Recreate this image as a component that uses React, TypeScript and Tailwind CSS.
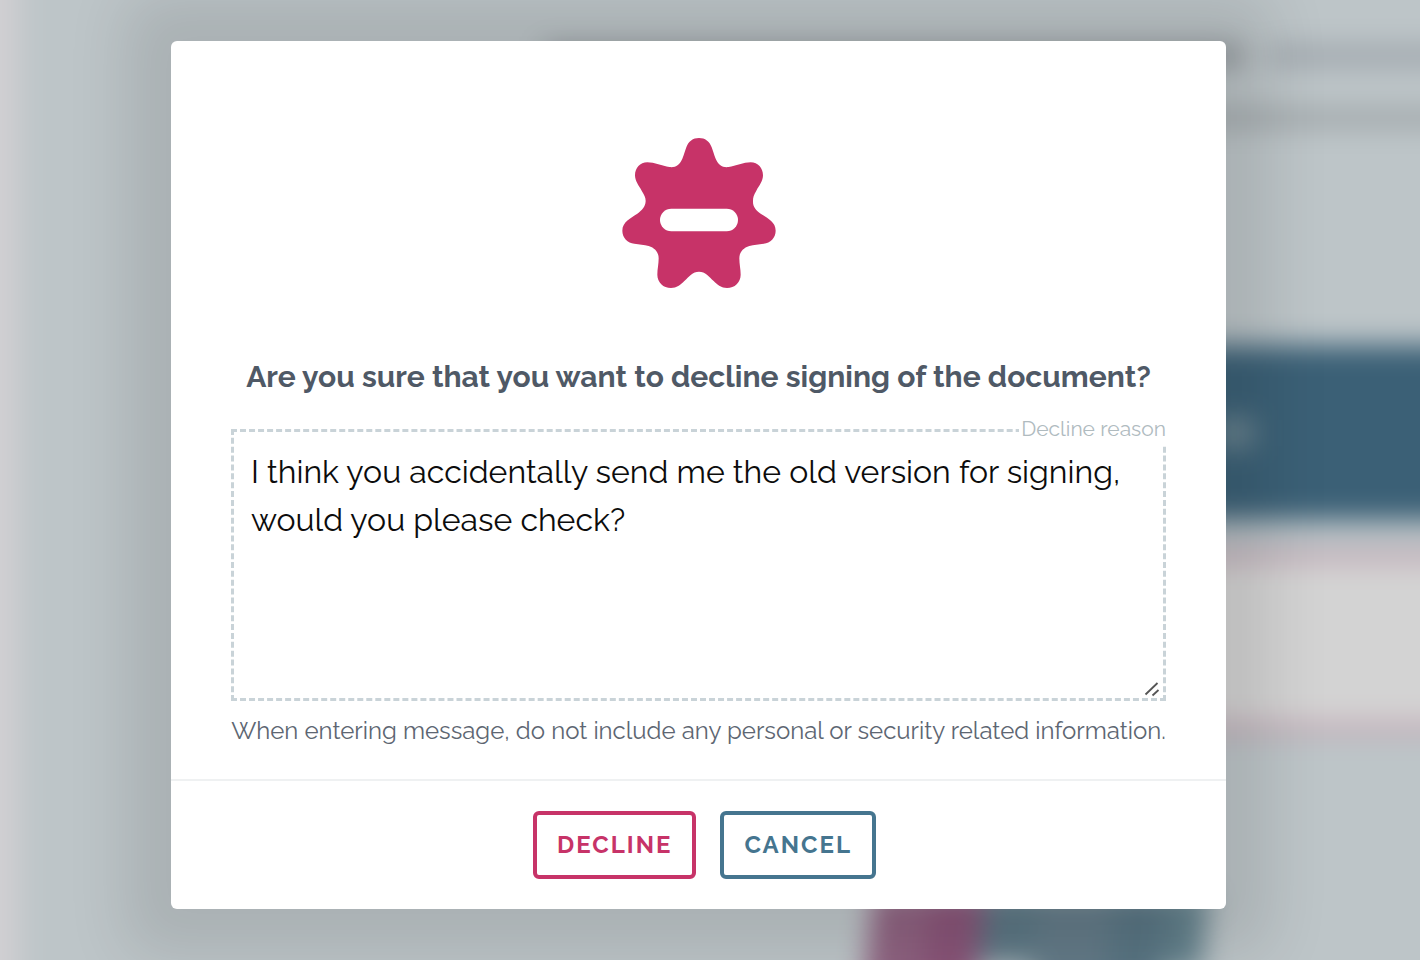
import React, { useState } from 'react';

const DeclineIcon: React.FC = () => (
  <svg viewBox="64 53 460 450" className="w-[154px] h-[150px]" aria-hidden="true">
    <path
      fill="#c73368"
      d="M294 53 C276 53 262 63 256 81 C252 92 249 103 244 115 C237 132 223 143 205 140 C184 137 160 126 139 126 C117 126 102 143 102 165 C102 182 113 195 122 211 C130 224 134 231 134 242 C133 260 123 270 109 280 C90 293 64 304 64 331 C64 352 80 368 100 370 C115 373 129 373 143 377 C162 383 173 396 173 414 C173 432 169 447 169 463 C169 486 187 503 210 503 C227 503 238 494 250 482 C264 469 275 454 294 454 C313 454 324 469 338 482 C350 494 361 503 378 503 C401 503 419 486 419 463 C419 447 415 432 415 414 C415 396 426 383 445 377 C459 373 473 373 488 370 C508 368 524 352 524 331 C524 304 498 293 479 280 C465 270 455 260 456 242 C456 231 458 224 466 211 C475 195 486 182 486 165 C486 143 471 126 449 126 C428 126 404 137 383 140 C365 143 351 132 344 115 C339 103 336 92 332 81 C326 63 312 53 294 53 Z"
    />
    <rect x="177" y="265" width="234" height="68" rx="34" fill="#ffffff" />
  </svg>
);

// Out-of-focus document page that sits behind the dialog
const Backdrop: React.FC = () => (
  <div className="absolute inset-0 overflow-hidden bg-[#bdc5c8]" aria-hidden="true">
    <div className="absolute -inset-12 flex blur-[14px]">
      <div className="w-[72px] bg-linear-to-r from-[#d2d0d3] from-75% to-[#c4c9cc]" />
      <div className="flex-1 flex flex-col bg-[#bdc5c8]">
        <div className="h-[393px] shrink-0 pt-[94px] pl-[520px] space-y-11">
          <div className="flex gap-6">
            <div className="w-[700px] h-5 bg-[#8a8f94]" />
            <div className="flex-1 h-5 bg-[#9ea5ab]" />
          </div>
          <div className="h-4 bg-[#9ba1a4]" />
        </div>
        <div className="h-[175px] shrink-0 ml-[600px] pl-[590px] flex items-center bg-[#3b6076]">
          <div className="w-10 h-7 bg-[#708892]" />
        </div>
        <div className="h-[180px] shrink-0 mt-8 ml-[600px] border-y-8 border-[#bf93a5] bg-[#d3d3d3]" />
        <div className="flex-1 pt-[160px] pl-[842px] flex">
          <div className="-skew-x-6 flex">
            <div className="w-14 h-36 bg-[#8e6280]" />
            <div className="w-14 h-36 bg-[#885377]" />
            <div className="w-14 h-18 bg-[#5b7683]" />
            <div className="w-18 h-36 bg-[#637a87]" />
            <div className="w-14 h-36 bg-[#587482]" />
            <div className="w-10 h-20 bg-[#62808b]" />
          </div>
        </div>
      </div>
    </div>
  </div>
);

export default function App() {
  const [reason, setReason] = useState(
    'I think you accidentally send me the old version for signing, would you please check?'
  );

  return (
    <div className="relative min-h-screen font-['Raleway','Lato',sans-serif]">
      <Backdrop />
      <main className="relative pt-[41px] pb-[51px] pr-[23px]">
        <div
          role="dialog"
          aria-labelledby="decline-title"
          className="w-full max-w-[1055px] mx-auto rounded-md bg-white shadow-[0_0_60px_46px_rgba(0,0,0,0.1)]"
        >
          <div className="px-[60px] pt-[97px] pb-8 flex flex-col items-center">
            <DeclineIcon />
            <h1 id="decline-title" className="mt-[69px] text-3xl leading-10 font-bold text-center text-[#4f5966]">
              Are you sure that you want to decline signing of the document?
            </h1>
            <div className="relative w-full mt-8">
              <label
                htmlFor="reason"
                className="absolute right-0 -top-4 pl-0.5 bg-white text-[21px] leading-8 text-[#b0bbbf]"
              >
                Decline reason
              </label>
              <textarea
                id="reason"
                value={reason}
                onChange={(e) => setReason(e.target.value)}
                className="block w-full h-[272px] px-[17px] py-4 resize-none border-[3px] border-dashed border-[#c9d3d8] bg-white text-[32px] leading-[48px] text-[#0c0c0c] outline-none"
              />
              <svg viewBox="0 0 16 16" className="absolute right-1.5 bottom-1 w-4 h-4" stroke="#555555" strokeWidth="1.8" aria-hidden="true">
                <path d="M1.5 13.5 L13.5 2 M8.5 14.5 L14.5 9" />
              </svg>
            </div>
            <p className="mt-3.5 text-2xl text-center text-[#5d6672]">
              When entering message, do not include any personal or security related information.
            </p>
          </div>
          <footer className="flex justify-center gap-6 pl-3 py-[30px] border-t-2 border-[#eff1f2]">
            <button className="h-[68px] px-5 rounded-md border-4 border-[#c73368] text-2xl font-bold tracking-[2px] text-[#c73368]">
              DECLINE
            </button>
            <button className="h-[68px] px-5 rounded-md border-4 border-[#45758f] text-2xl font-bold tracking-[2px] text-[#45758f]">
              CANCEL
            </button>
          </footer>
        </div>
      </main>
    </div>
  );
}
